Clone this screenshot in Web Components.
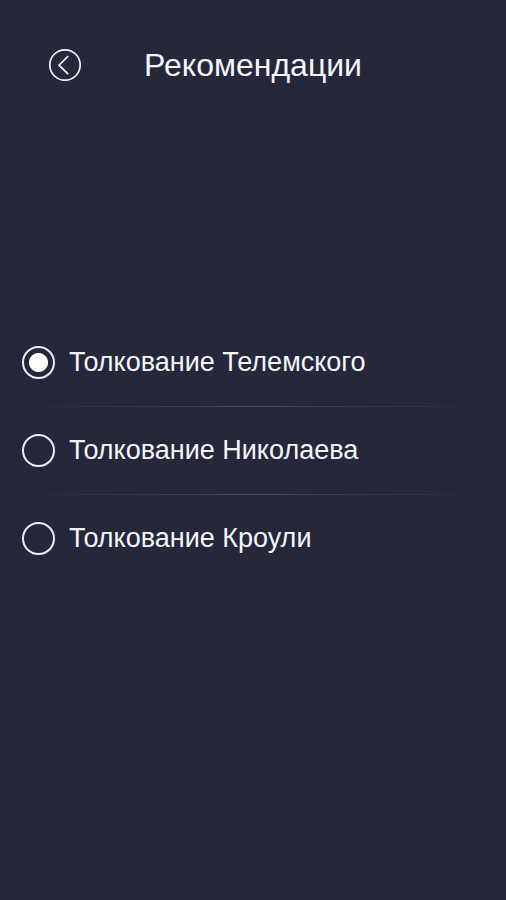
<!DOCTYPE html>
<html lang="ru"><head><meta charset="utf-8"><title>Рекомендации</title>
<style>html,body{margin:0;background:#25273a}body{font-family:"Liberation Sans",Arial,sans-serif;color:#f6f6fa}</style></head>
<body>
<settings-screen>
<top-bar slot="header">Рекомендации</top-bar>
<choice-list></choice-list>
</settings-screen>
<script>
customElements.define('settings-screen',class extends HTMLElement{constructor(){super();this.attachShadow({mode:'open'}).innerHTML=`
<style>:host{display:flex;flex-direction:column;min-height:100vh;background:#25273a}
main{flex:1;display:flex;flex-direction:column;padding-top:188px}</style>
<slot name="header"></slot><main><slot></slot></main>`}});
customElements.define('top-bar',class extends HTMLElement{constructor(){super();this.attachShadow({mode:'open'}).innerHTML=`
<style>:host{display:grid;grid-template-columns:1fr auto 1fr;align-items:center;height:130px}
button{justify-self:start;margin:0 0 0 48px;padding:0;border:0;background:none;color:inherit;width:34px;height:34px}
svg{display:block}h1{margin:0;font-size:32px;line-height:40px;font-weight:400}</style>
<button type="button" aria-label="Назад"><svg width="34" height="34" viewBox="0 0 34 34" fill="none" stroke="currentColor" stroke-width="1.7"><circle cx="17" cy="17" r="15.2"/><path d="M20.2 8 11 17.2 20.2 26.2"/></svg></button><h1><slot></slot></h1>`}});
customElements.define('choice-list',class extends HTMLElement{constructor(){super();this.attachShadow({mode:'open'}).innerHTML=`
<style>:host{display:block}
fieldset{margin:0;padding:0;border:0;min-width:0}
label{display:flex;align-items:center;gap:14px;height:88px;padding:0 22px;font-size:27px;line-height:32px;box-sizing:border-box}
label+label{background:linear-gradient(90deg,transparent,#45475b 50%,transparent) center top/calc(100% - 20px) 1px no-repeat}
input{appearance:none;box-sizing:border-box;flex:none;width:33px;height:33px;margin:0;border:2px solid #ececf4;border-radius:50%}
input:checked{background:radial-gradient(circle,#fff 9px,transparent 10px)}</style>
<fieldset aria-label="Рекомендации"><label><input type="radio" name="t" checked><span>Толкование Телемского</span></label>
<label><input type="radio" name="t"><span>Толкование Николаева</span></label>
<label><input type="radio" name="t"><span>Толкование Кроули</span></label></fieldset>`}});
</script></body></html>
